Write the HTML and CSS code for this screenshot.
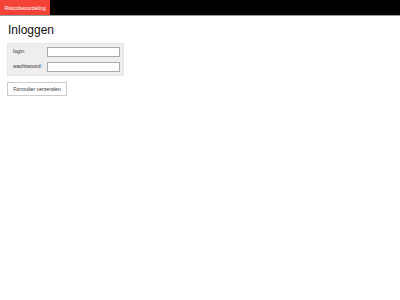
FILE: index.html
```html
<!DOCTYPE html>
<html lang="nl">
<head>
    <meta charset="UTF-8">
    <title>Inloggen</title>
    <link rel="stylesheet" href="styles.css">
</head>
<body>

    <nav class="topbar">
        <a class="tab" href="/">Risicobeoordeling</a>
    </nav>

    <div class="container">
        <h1>Inloggen</h1>
        <form class="login">
            <div class="fields">
                <div class="row">
                    <label for="login">login:</label>
                    <input type="text" id="login" name="login">
                </div>
                <div class="row">
                    <label for="pw">wachtwoord:</label>
                    <input type="password" id="pw" name="pw">
                </div>
            </div>
            <button type="submit" class="submit">Formulier verzenden</button>
        </form>
    </div>

</body>
</html>
```

FILE: styles.css
```css
body {
    margin: 0;
    font-family: "Liberation Sans", Arial, sans-serif;
    background: #fff;
    color: #222;
}
.topbar {
    display: flex;
    height: 15px;
    background: #000;
    border-bottom: 1px solid #999;
}
.tab {
    display: flex;
    align-items: center;
    width: 50px;
    justify-content: center;
    background: #f44336;
    color: #fff;
    font-size: 5.2px;
    text-decoration: none;
}
.container {
    padding: 0 7px;
}
h1 {
    font-size: 12px;
    line-height: 14px;
    font-weight: normal;
    margin: 7px 0 6px 1px;
    color: #111;
}
.fields {
    width: 117px;
    box-sizing: border-box;
    background: #eee;
    border: 1px solid #e6e6e6;
    padding: 3px 3px 3px 5px;
    display: flex;
    flex-direction: column;
    gap: 5px;
}
.row {
    display: flex;
    align-items: flex-start;
    height: 10px;
}
.row label {
    width: 35px;
    font-size: 5.2px;
    line-height: 8px;
    color: #333;
}
.row input {
    width: 73px;
    height: 10px;
    box-sizing: border-box;
    border: 1px solid #aaa;
    background: #fff;
    padding: 0;
    margin: 0;
}
.submit {
    display: block;
    margin-top: 6px;
    width: 60px;
    height: 14px;
    padding: 0;
    font-family: inherit;
    font-size: 5.2px;
    color: #333;
    background: #fff;
    border: 1px solid #ccc;
}
```
